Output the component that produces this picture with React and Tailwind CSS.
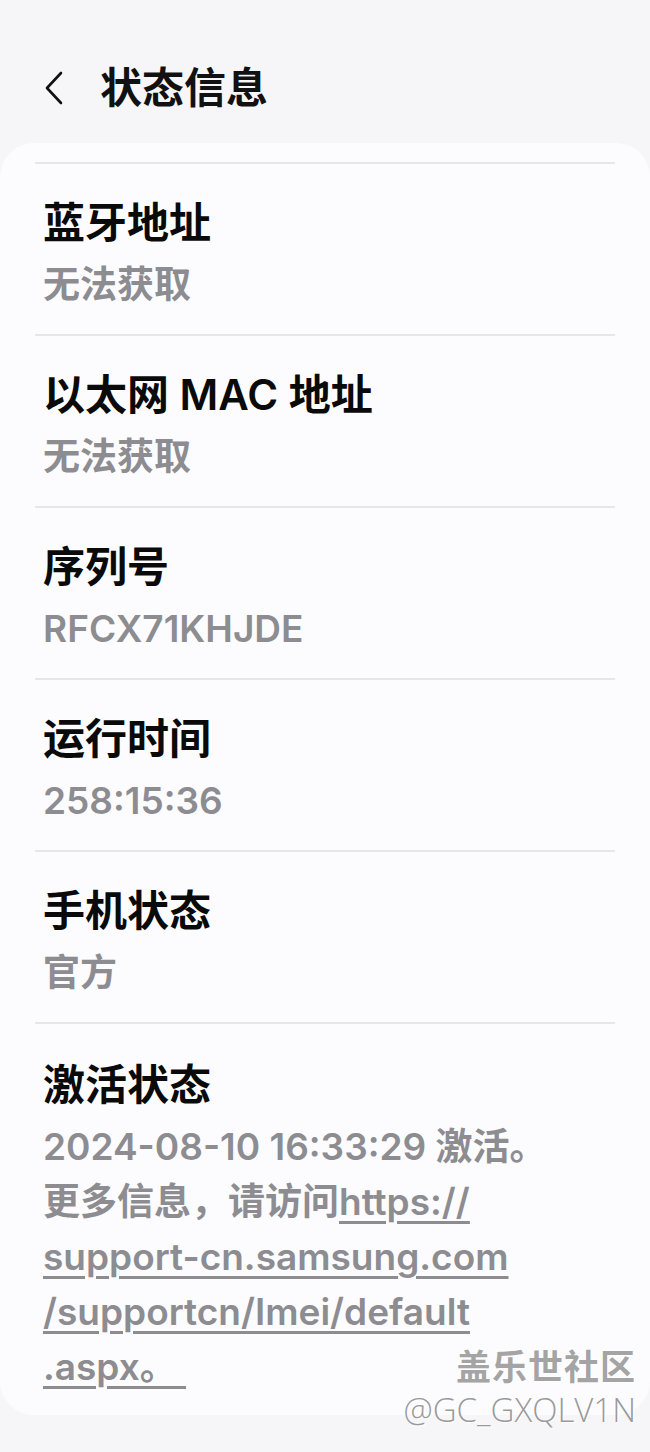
import React from "react";

const rows = [
  { title: "蓝牙地址", value: "无法获取" },
  { title: "以太网 MAC 地址", value: "无法获取" },
  { title: "序列号", value: "RFCX71KHJDE" },
  { title: "运行时间", value: "258:15:36" },
  { title: "手机状态", value: "官方" },
];

const font = { fontFamily: '"Inter", "Noto Sans CJK SC", sans-serif' };
const link = "underline decoration-[3px] underline-offset-[6px]";

function ChevronLeft() {
  return (
    <svg width="24" height="34" viewBox="0 0 24 34" fill="none">
      <path d="M19 2 L5 17 L19 32" stroke="#111" strokeWidth="2.6" strokeLinecap="round" strokeLinejoin="round" />
    </svg>
  );
}

export default function App() {
  return (
    <div className="relative w-[650px] h-[1452px] bg-[#f6f6f9] overflow-hidden" style={font}>
      {/* header */}
      <div className="flex items-center h-[143px] pl-[42px] pt-[32px]">
        <ChevronLeft />
        <h1 className="ml-[34px] text-[42px] font-bold text-[#111] leading-none">状态信息</h1>
      </div>

      {/* card */}
      <div className="bg-[#fcfcfe] rounded-[34px] h-[1272px] pt-[19px] px-[35px]">
        {rows.map((r) => (
          <div key={r.title} className="border-t-2 border-[#e6e6ea] pt-[30px] pb-[20px] px-[8px]">
            <div className="text-[42px] font-semibold text-[#0a0a0a] leading-[58px]">{r.title}</div>
            <div className="mt-[4px] text-[37px] font-semibold text-[#8c8c91] leading-[58px]">{r.value}</div>
          </div>
        ))}
        <div className="border-t-2 border-[#e6e6ea] pt-[32px] px-[8px]">
          <div className="text-[42px] font-semibold text-[#0a0a0a] leading-[58px]">激活状态</div>
          <div className="mt-[5px] text-[37px] font-semibold text-[#8c8c91] leading-[55px]">
            <div>2024-08-10 16:33:29 激活。</div>
            <div>
              更多信息，请访问
              <span className={link}>https://</span>
            </div>
            <div className={link}>support-cn.samsung.com</div>
            <div className={link}>/supportcn/Imei/default</div>
            <div className={link}>.aspx。&nbsp;</div>
          </div>
        </div>
      </div>

      {/* watermark */}
      <div className="absolute right-[14px] top-[1342px] flex flex-col items-end">
        <div
          className="text-[35px] font-bold text-[#a4a4a4] leading-[46px] tracking-[1px]"
          style={{ fontFamily: '"Noto Sans CJK SC", sans-serif', textShadow: "0 0 2px #fff, 1px 1px 0 #fff, -1px -1px 0 #fff" }}
        >
          盖乐世社区
        </div>
        <div
          className="text-[33px] font-light text-[#9a9a9a] leading-[44px]"
          style={{ fontFamily: '"Open Sans", sans-serif', textShadow: "0 0 2px #fff, 1px 1px 0 #fff" }}
        >
          @GC_GXQLV1N
        </div>
      </div>
    </div>
  );
}
